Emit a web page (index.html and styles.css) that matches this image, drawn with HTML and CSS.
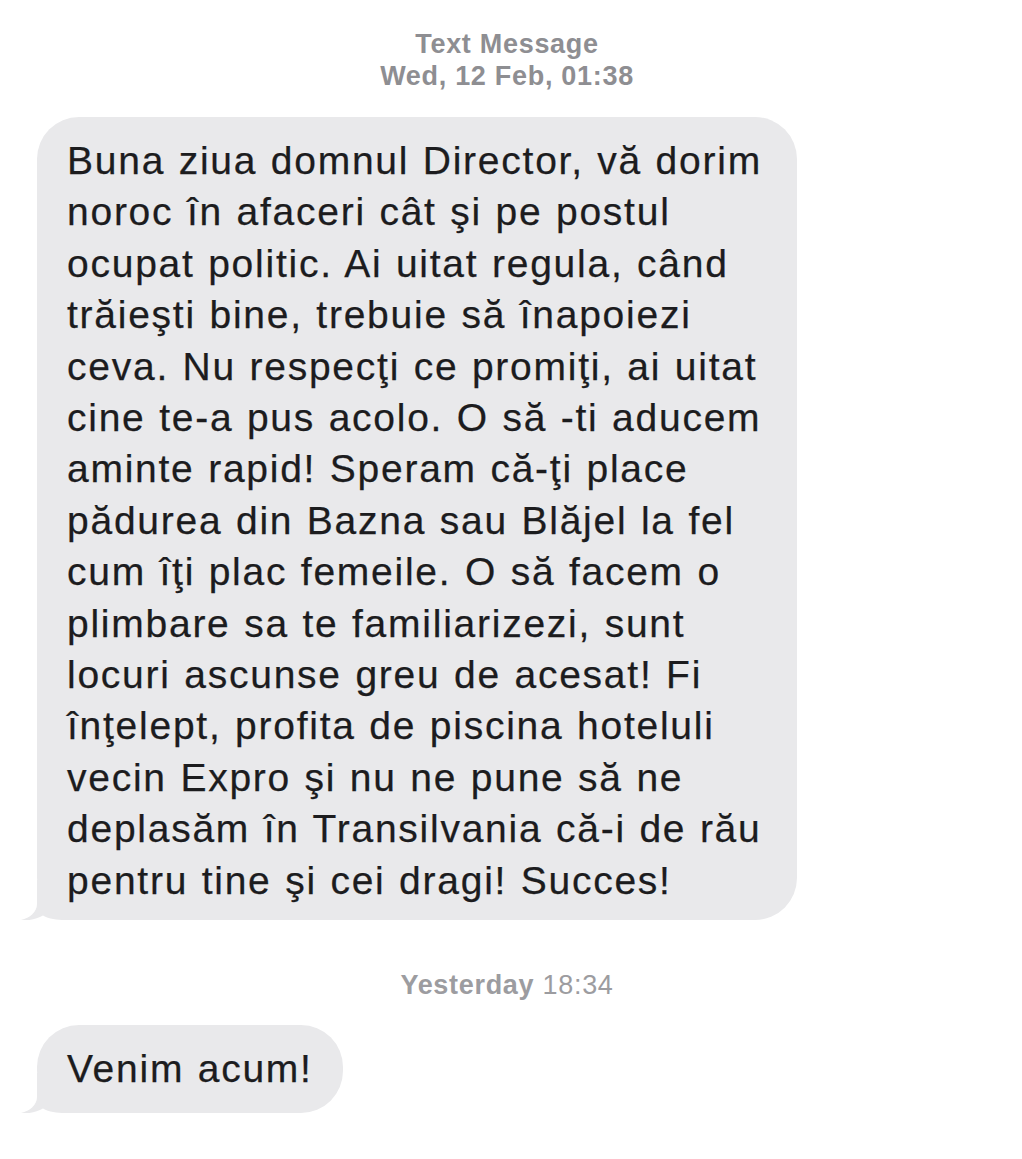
FILE: index.html
```html
<!DOCTYPE html>
<html lang="ro">
<head>
<meta charset="utf-8">
<title>Text Message</title>
<link rel="stylesheet" href="styles.css">
</head>
<body>
<div class="thread">
  <div class="stamp stamp-top">
    <div class="stamp-title">Text Message</div>
    <div class="stamp-title">Wed, 12 Feb, 01:38</div>
  </div>
  <div class="bubble bubble-long">
    <svg class="tail" width="60" height="40" viewBox="0 0 60 40"><path d="M16,0 L16,24 C16,32 9,38 0,40 C8,41 16,39 22,35.5 C28,39 36,40 44,40 L60,40 L60,0 Z" fill="#e9e9eb"/></svg>
    <p class="msg">Buna ziua domnul Director, vă dorim<br>noroc în afaceri cât şi pe postul<br>ocupat politic. Ai uitat regula, când<br>trăieşti bine, trebuie să înapoiezi<br>ceva. Nu respecţi ce promiţi, ai uitat<br>cine te-a pus acolo. O să -ti aducem<br>aminte rapid! Speram că-ţi place<br>pădurea din Bazna sau Blăjel la fel<br>cum îţi plac femeile. O să facem o<br>plimbare sa te familiarizezi, sunt<br>locuri ascunse greu de acesat! Fi<br>înţelept, profita de piscina hoteluli<br>vecin Expro şi nu ne pune să ne<br>deplasăm în Transilvania că-i de rău<br>pentru tine şi cei dragi! Succes!</p>
  </div>
  <div class="stamp stamp-mid"><span class="stamp-title">Yesterday</span> <span class="stamp-time">18:34</span></div>
  <div class="bubble bubble-short">
    <svg class="tail" width="60" height="40" viewBox="0 0 60 40"><path d="M16,0 L16,24 C16,32 9,38 0,40 C8,41 16,39 22,35.5 C28,39 36,40 44,40 L60,40 L60,0 Z" fill="#e9e9eb"/></svg>
    <p class="msg">Venim acum!</p>
  </div>
</div>
</body>
</html>
```
FILE: styles.css
```css
html, body {
  margin: 0;
  padding: 0;
  background: #ffffff;
}
.thread {
  display: flex;
  flex-direction: column;
  align-items: flex-start;
  padding-top: 28px;
  font-family: "Liberation Sans", Arial, sans-serif;
}
.stamp {
  align-self: stretch;
  text-align: center;
  color: #8e8e92;
  font-size: 27px;
  line-height: 32px;
  padding-right: 8px;
  letter-spacing: 0.7px;
}
.stamp-title {
  font-weight: 700;
}
.stamp-time {
  font-weight: 400;
}
.stamp-mid {
  margin-top: 49px;
  color: #9c9ca0;
}
.bubble {
  position: relative;
  background: #e9e9eb;
  border-radius: 42px;
  margin-left: 37px;
  box-sizing: border-box;
  padding: 18px 30px 14px 30px;
}
.bubble-long {
  margin-top: 25px;
  width: 760px;
}
.bubble-short {
  margin-top: 24px;
  width: 306px;
  padding-top: 18px;
  padding-bottom: 18px;
}
.msg {
  position: relative;
  margin: 0;
  white-space: nowrap;
  font-size: 39px;
  line-height: 51.4px;
  color: #1c1c1e;
  letter-spacing: 1.75px;
  word-spacing: 1px;
  -webkit-text-stroke: 0.25px #1c1c1e;
}
.tail {
  position: absolute;
  left: -16px;
  bottom: 0;
}
```
